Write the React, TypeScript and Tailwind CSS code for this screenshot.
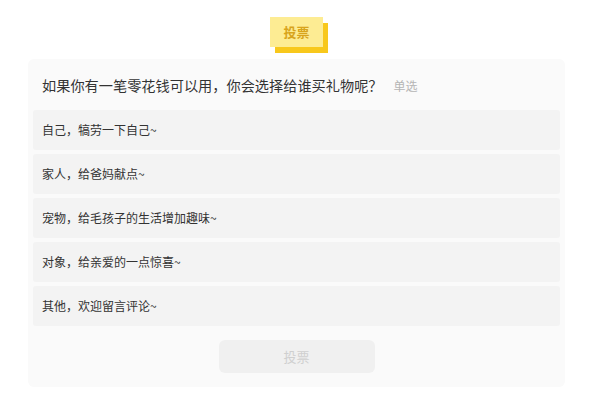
const options = [
  "自己，犒劳一下自己~",
  "家人，给爸妈献点~",
  "宠物，给毛孩子的生活增加趣味~",
  "对象，给亲爱的一点惊喜~",
  "其他，欢迎留言评论~",
];

export default function App() {
  return (
    <main
      className="h-[418px] w-[600px] bg-white pl-[28px] pr-[35px] pt-[17px]"
      style={{ fontFamily: '"Noto Sans CJK SC", "Noto Sans", sans-serif' }}
    >
      <div className="flex justify-center">
        <div className="relative h-[30px] w-[53px]">
          <div className="absolute left-[5px] top-[6px] h-[30px] w-[53px] bg-[#f8c81c]" />
          <div className="relative flex h-[30px] w-[53px] items-center justify-center bg-[#fdec93] text-[13px] font-bold text-[#d8a41c]">
            投票
          </div>
        </div>
      </div>

      <section className="mt-[12px] rounded-md bg-[#fafafa] px-[5px] pb-[14px] pt-[16px]">
        <div className="flex items-baseline px-[9px]">
          <h1 className="text-[14.2px] text-[#333]">如果你有一笔零花钱可以用，你会选择给谁买礼物呢？</h1>
          <span className="ml-[11px] text-[12px] text-[#b5b5b5]">单选</span>
        </div>

        <ul className="mt-[14px] flex flex-col gap-[4px]">
          {options.map((o) => (
            <li
              key={o}
              className="flex h-[40px] items-center rounded-[3px] bg-[#f3f3f3] px-[9px] text-[12px] text-[#333]"
            >
              {o}
            </li>
          ))}
        </ul>

        <div className="mt-[14px] flex justify-center">
          <button className="h-[33px] w-[156px] rounded-md bg-[#f0f0f0] text-[13px] text-[#cfcfcf]">
            投票
          </button>
        </div>
      </section>
    </main>
  );
}
